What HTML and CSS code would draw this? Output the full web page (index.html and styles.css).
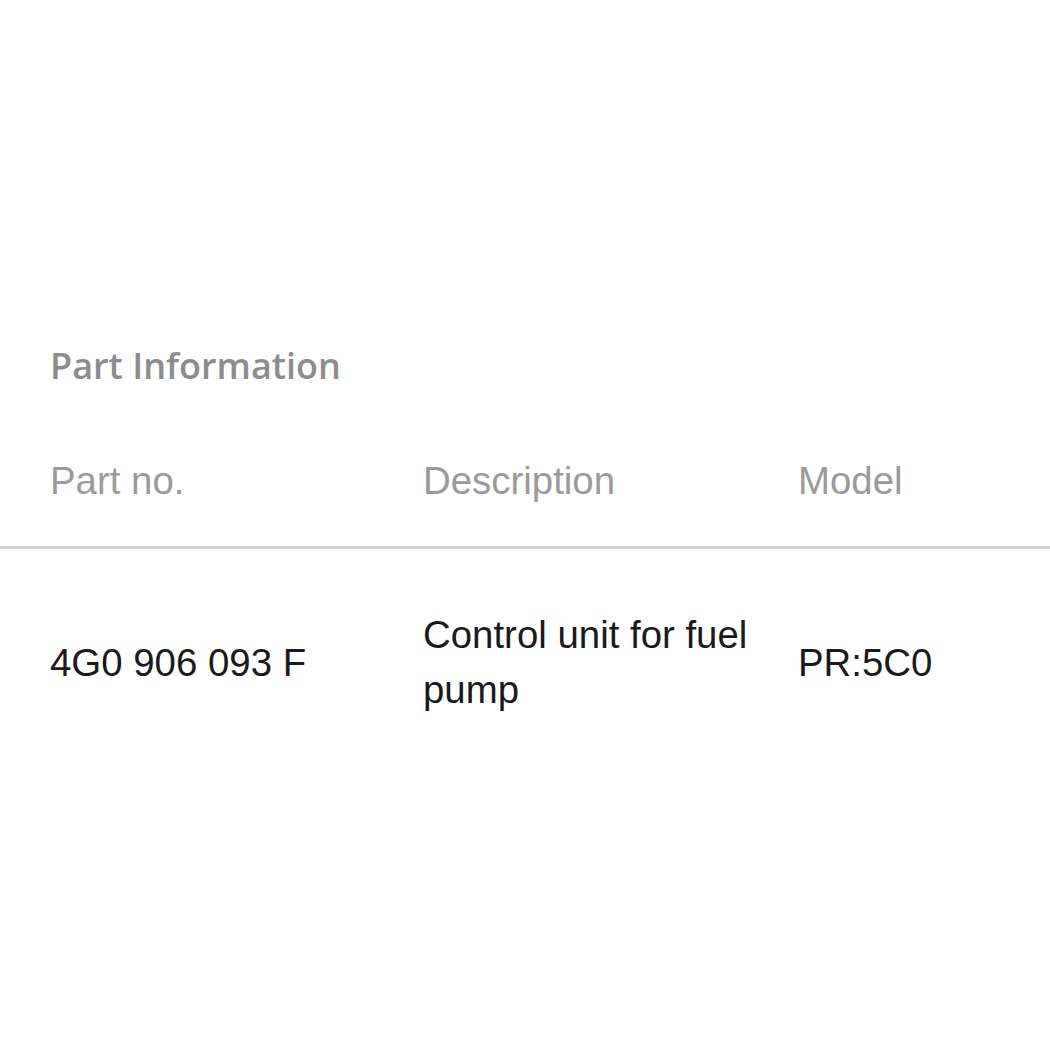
FILE: index.html
```html
<!DOCTYPE html>
<html lang="en">
<head>
<meta charset="utf-8">
<title>Part Information</title>
<link rel="stylesheet" href="styles.css">
</head>
<body>
<section class="part-info">
  <h2 class="part-info__title">Part Information</h2>
  <div class="parts-table">
    <div class="parts-table__head">
      <div class="cell cell--first">Part no.</div>
      <div class="cell">Description</div>
      <div class="cell">Model</div>
    </div>
    <div class="parts-table__row">
      <div class="cell cell--first">4G0 906 093 F</div>
      <div class="cell cell--desc">Control unit for fuel pump</div>
      <div class="cell">PR:5C0</div>
    </div>
  </div>
</section>
</body>
</html>
```
FILE: styles.css
```css
html, body {
  margin: 0;
  padding: 0;
  background: #ffffff;
}

body {
  width: 1050px;
  height: 1050px;
  overflow: hidden;
}

.part-info {
  padding-top: 341px;
}

.part-info__title {
  margin: 0 0 0 50px;
  font-family: "Open Sans", "Noto Sans", sans-serif;
  font-weight: 600;
  font-size: 36px;
  line-height: 50px;
  color: #8c8c8c;
}

.parts-table {
  margin-top: 68px;
}

.parts-table__head,
.parts-table__row {
  display: grid;
  grid-template-columns: 423px 375px 1fr;
  font-family: "Liberation Sans", Arial, sans-serif;
  font-size: 38.4px;
}

.parts-table__head {
  color: #9a9a9a;
  line-height: 44px;
  padding-bottom: 43px;
  border-bottom: 3px solid #d2d2d2;
}

.parts-table__row {
  color: #1a1a1a;
  line-height: 55px;
  padding-top: 58px;
  align-items: center;
}

.cell--first {
  padding-left: 50px;
}

.cell--desc {
  padding-right: 30px;
}
```
